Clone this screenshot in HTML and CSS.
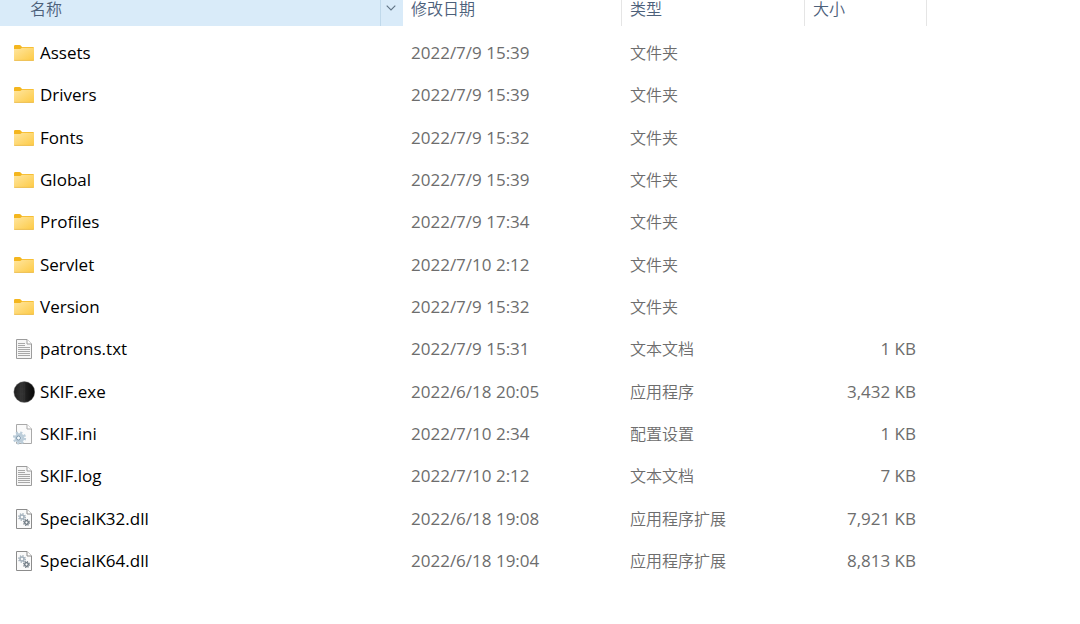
FILE: index.html
```html
<!DOCTYPE html>
<html lang="zh-CN">
<head>
<meta charset="utf-8">
<title>SKIF</title>
<link rel="stylesheet" href="styles.css">
</head>
<body>
<svg class="defs" aria-hidden="true">
  <defs>
    <linearGradient id="folder-fill" x1="0" y1="0" x2="1" y2="1">
      <stop offset="0" stop-color="#ffe6a0"/><stop offset="1" stop-color="#fdca45"/>
    </linearGradient>
    <linearGradient id="ball-fill" x1="0" y1="0" x2="1" y2="0">
      <stop offset="0" stop-color="#1c1c1c"/><stop offset=".4" stop-color="#343434"/><stop offset=".6" stop-color="#1e1e1e"/><stop offset="1" stop-color="#060606"/>
    </linearGradient>
    <symbol id="folder" viewBox="0 0 22 22">
      <path d="M1 4.200Q1 3 2.200 3H6.500Q7.200 3 7.700 3.500L9 5H19.800Q21 5 21 6.200V10H1Z" fill="#f4b61e"/>
      <path d="M1 7H7.300L9 5.700H20.200Q21 5.700 21 6.500V18Q21 18.700 20.300 18.700H1.700Q1 18.700 1 18Z" fill="url(#folder-fill)"/>
      <path d="M1.200 18.400H20.800" stroke="#e9b94a" stroke-width=".8"/>
    </symbol>
    <symbol id="text" viewBox="0 0 22 22">
      <path d="M3.500 1.500H14L18.500 6V20.500H3.500Z" fill="#f6f6f6" stroke="#9c9c9c"/>
      <path d="M14 1.500V6H18.500" fill="#fff" stroke="#9c9c9c"/>
      <path d="M5 5.500H12M5 7.500H12M5 9.500H17M5 11.500H17M5 13.500H17M5 15.500H17M5 17.500H17" stroke="#a8a8a8"/>
    </symbol>
    <symbol id="ball" viewBox="0 0 22 22">
      <circle cx="11.300" cy="11" r="10.500" fill="url(#ball-fill)" stroke="#888" stroke-width=".4"/>
      <path d="M7.500 3V19M11.500 1V21M3 8H12M2 13H12" stroke="#484848" stroke-width=".4" opacity=".5"/>
    </symbol>
    <symbol id="gear" viewBox="-6 -6 12 12">
      <circle r="4.300" fill="none" stroke="currentColor" stroke-width="2" stroke-dasharray="1.700 1.677"/>
      <circle r="2.700" fill="none" stroke="currentColor" stroke-width="2"/>
    </symbol>
    <symbol id="config" viewBox="0 0 22 22">
      <path d="M3.500 1.500H14L18.500 6V20.500H3.500Z" fill="#fafafa" stroke="#a9a9a9"/>
      <path d="M14 1.500V6H18.500" fill="#fff" stroke="#a9a9a9"/>
      <circle cx="6.500" cy="15" r="5" fill="#d5e3ed"/>
      <use href="#gear" x="-1" y="7.500" width="15" height="15" color="#bccdd9"/>
      <circle cx="5.500" cy="15" r="2" fill="#f5fafe" stroke="#7893a8" stroke-width=".9"/>
    </symbol>
    <symbol id="library" viewBox="0 0 22 22">
      <path d="M3.500 1.500H14L18.500 6V20.500H3.500Z" fill="#fafafa" stroke="#8c8c8c"/>
      <path d="M14 1.500V6H18.500" fill="#fff" stroke="#8c8c8c"/>
      <use href="#gear" x="4.500" y="4.500" width="9" height="9" color="#a3b0bb"/>
      <use href="#gear" x="9.500" y="10.500" width="8" height="8" color="#66727c"/>
    </symbol>
  </defs>
</svg>
<table class="files">
  <colgroup>
    <col class="col-name"><col class="col-date"><col class="col-type"><col class="col-size"><col>
  </colgroup>
  <thead>
    <tr>
      <th scope="col"><div class="head head-name"><span>名称</span><button class="drop" type="button" aria-label="筛选名称"><svg class="chevron" viewBox="0 0 10 6"><path d="M.7.7 5 5 9.300.7" fill="none" stroke="#5f7385" stroke-width="1.100"/></svg></button></div></th>
      <th scope="col"><div class="head head-line">修改日期</div></th>
      <th scope="col"><div class="head head-line">类型</div></th>
      <th scope="col"><div class="head head-line">大小</div></th>
      <td></td>
    </tr>
  </thead>
  <tbody>
    <tr><td><div class="name"><svg class="icon"><use href="#folder"/></svg>Assets</div></td><td class="date">2022/7/9 15:39</td><td class="type">文件夹</td><td class="size"></td><td></td></tr>
    <tr><td><div class="name"><svg class="icon"><use href="#folder"/></svg>Drivers</div></td><td class="date">2022/7/9 15:39</td><td class="type">文件夹</td><td class="size"></td><td></td></tr>
    <tr><td><div class="name"><svg class="icon"><use href="#folder"/></svg>Fonts</div></td><td class="date">2022/7/9 15:32</td><td class="type">文件夹</td><td class="size"></td><td></td></tr>
    <tr><td><div class="name"><svg class="icon"><use href="#folder"/></svg>Global</div></td><td class="date">2022/7/9 15:39</td><td class="type">文件夹</td><td class="size"></td><td></td></tr>
    <tr><td><div class="name"><svg class="icon"><use href="#folder"/></svg>Profiles</div></td><td class="date">2022/7/9 17:34</td><td class="type">文件夹</td><td class="size"></td><td></td></tr>
    <tr><td><div class="name"><svg class="icon"><use href="#folder"/></svg>Servlet</div></td><td class="date">2022/7/10 2:12</td><td class="type">文件夹</td><td class="size"></td><td></td></tr>
    <tr><td><div class="name"><svg class="icon"><use href="#folder"/></svg>Version</div></td><td class="date">2022/7/9 15:32</td><td class="type">文件夹</td><td class="size"></td><td></td></tr>
    <tr><td><div class="name"><svg class="icon"><use href="#text"/></svg>patrons.txt</div></td><td class="date">2022/7/9 15:31</td><td class="type">文本文档</td><td class="size">1 KB</td><td></td></tr>
    <tr><td><div class="name"><svg class="icon"><use href="#ball"/></svg>SKIF.exe</div></td><td class="date">2022/6/18 20:05</td><td class="type">应用程序</td><td class="size">3,432 KB</td><td></td></tr>
    <tr><td><div class="name"><svg class="icon"><use href="#config"/></svg>SKIF.ini</div></td><td class="date">2022/7/10 2:34</td><td class="type">配置设置</td><td class="size">1 KB</td><td></td></tr>
    <tr><td><div class="name"><svg class="icon"><use href="#text"/></svg>SKIF.log</div></td><td class="date">2022/7/10 2:12</td><td class="type">文本文档</td><td class="size">7 KB</td><td></td></tr>
    <tr><td><div class="name"><svg class="icon"><use href="#library"/></svg>SpecialK32.dll</div></td><td class="date">2022/6/18 19:08</td><td class="type">应用程序扩展</td><td class="size">7,921 KB</td><td></td></tr>
    <tr><td><div class="name"><svg class="icon"><use href="#library"/></svg>SpecialK64.dll</div></td><td class="date">2022/6/18 19:04</td><td class="type">应用程序扩展</td><td class="size">8,813 KB</td><td></td></tr>
  </tbody>
</table>
</body>
</html>
```
FILE: styles.css
```css
body {
  margin: 0;
  background: #fff;
  color: #000;
  font: 17px/24px "Open Sans", "Noto Sans", "Noto Sans CJK SC", sans-serif;
}
.defs {
  position: absolute;
  width: 0;
  height: 0;
}
.files {
  width: 100%;
  table-layout: fixed;
  border-collapse: collapse;
}
.col-name { width: 403px; }
.col-date { width: 219px; }
.col-type { width: 183px; }
.col-size { width: 122px; }
.files th,
.files td {
  padding: 0;
  text-align: left;
  vertical-align: middle;
  white-space: nowrap;
}
.files th {
  padding-bottom: 6px;
  font-weight: 400;
}
.head {
  box-sizing: border-box;
  height: 26px;
  padding-left: 8px;
  color: #4c607a;
  font: 350 16px/16px "Noto Sans CJK SC", sans-serif;
}
.head-line {
  border-right: 1px solid #e5e5e5;
}
.head-name {
  display: flex;
  justify-content: space-between;
  padding-left: 30px;
  background: #d9ebf9;
}
.drop {
  display: flex;
  justify-content: center;
  width: 23px;
  padding: 5px 2px 0 0;
  border: 0;
  border-left: 1px solid #c0d9eb;
  background: none;
}
.chevron {
  width: 10px;
  height: 6px;
}
.files tbody tr { height: 42px; }
.files tbody tr:nth-child(3n) { height: 43px; }
.name {
  display: flex;
  align-items: center;
  gap: 5px;
  padding-left: 13px;
}
.icon {
  width: 22px;
  height: 22px;
}
.files .date,
.files .type {
  padding-left: 8px;
  color: #6d6d6d;
}
.files .type {
  padding-bottom: 2px;
  font: 350 16px/24px "Noto Sans CJK SC", sans-serif;
}
.files .size {
  padding-right: 11px;
  color: #6d6d6d;
  text-align: right;
}
```
